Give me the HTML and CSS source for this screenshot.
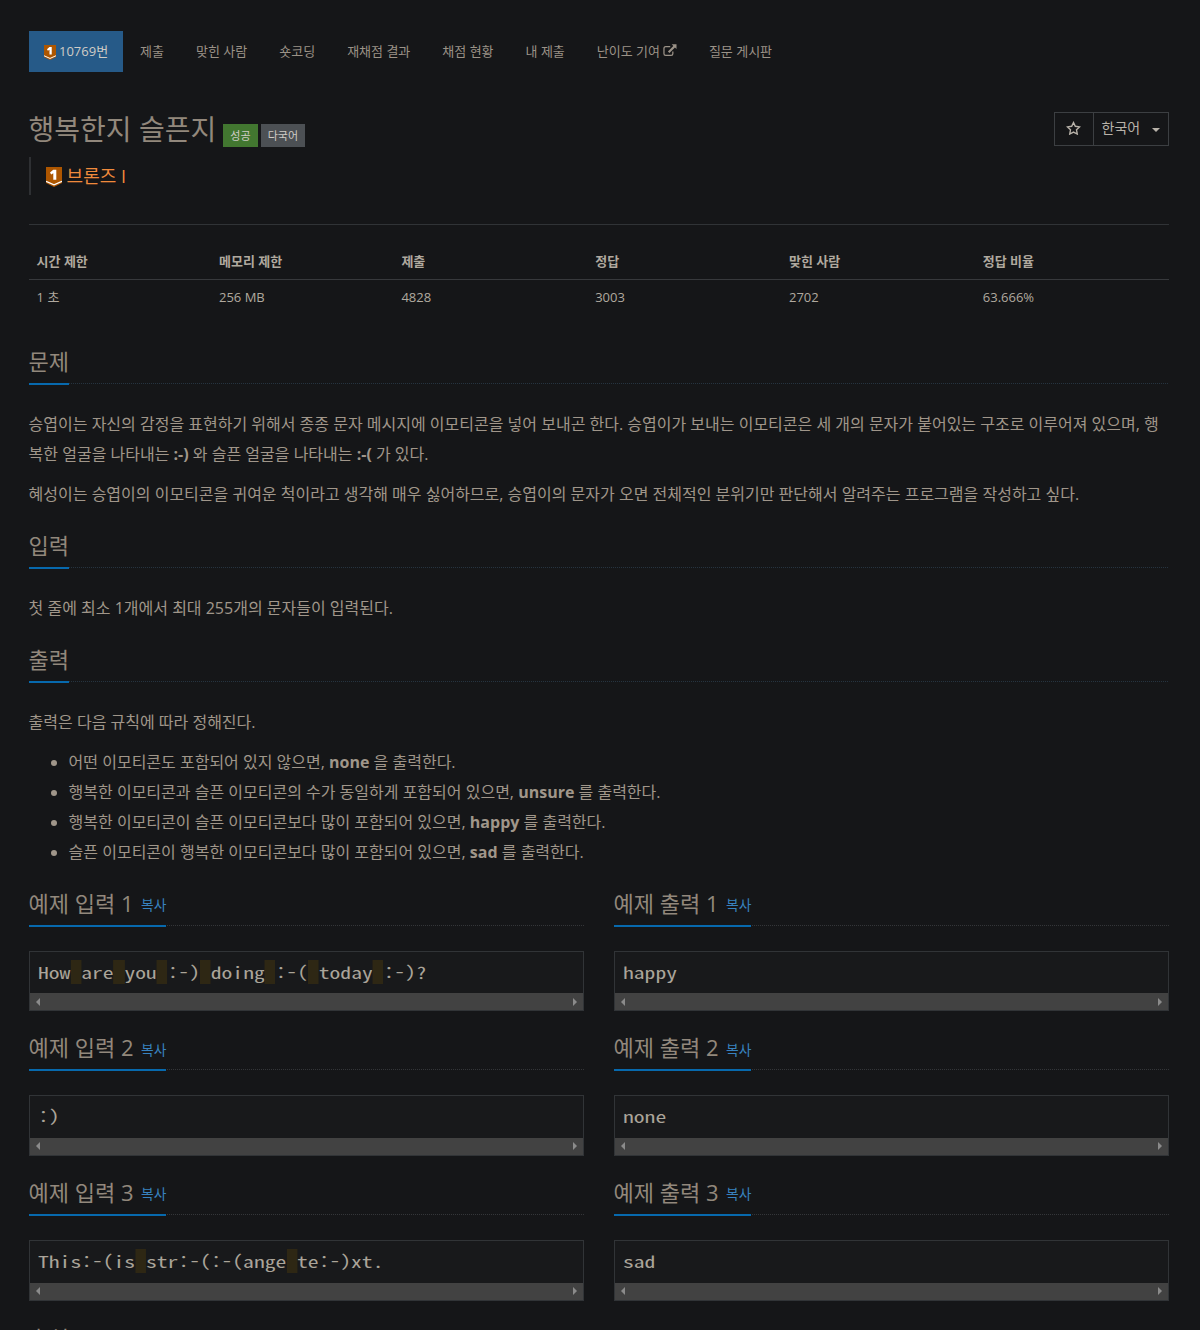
FILE: index.html
```html
<!DOCTYPE html>
<html lang="ko">
<head>
<meta charset="utf-8">
<title>10769번: 행복한지 슬픈지</title>
<link rel="stylesheet" href="styles.css">
</head>
<body>
<svg class="defs" width="0" height="0">
  <symbol id="tier" viewBox="0 0 16 20">
    <path fill="#ad5600" d="M0 0h16v16l-8 4-8-4z"/>
    <path fill="none" stroke="#fff" stroke-width="1.3" d="M0 14.3l8 3.6 8-3.6"/>
    <path fill="#fff" d="M7.3 2.8h3v10H7.300V6.300L5.200 7.500 4 5.600z"/>
  </symbol>
</svg>
<main class="container">
  <ul class="menu">
    <li class="active"><svg class="tier-sm"><use href="#tier"/></svg> 10769번</li>
    <li>제출</li>
    <li>맞힌 사람</li>
    <li>숏코딩</li>
    <li>재채점 결과</li>
    <li>채점 현황</li>
    <li>내 제출</li>
    <li>난이도 기여 <svg class="ext" viewBox="0 0 14 13"><path fill="none" stroke="currentColor" stroke-width="1.3" d="M7.5 2.6H2.8Q1 2.6 1 4.4v5.4q0 1.8 1.8 1.8h5.6q1.8 0 1.8-1.8V7.5"/><path fill="currentColor" d="M9 0h5v5l-1.6-1.6-5.7 5.7-1.6-1.6 5.6-5.7z"/></svg></li>
    <li>질문 게시판</li>
  </ul>

  <header class="title-row">
    <h1>행복한지 슬픈지</h1>
    <span class="label success">성공</span>
    <span class="label lang">다국어</span>
    <div class="buttons">
      <button class="star"><svg viewBox="0 0 14 13"><path fill="none" stroke="currentColor" stroke-width="1.3" stroke-linejoin="miter" d="M7 1.4l1.700 3.500 3.900.6-2.800 2.700.7 3.900L7 10.300 3.500 12.100l.7-3.900L1.400 5.500l3.900-.6z"/></svg></button>
      <button class="language">한국어<i class="caret"></i></button>
    </div>
  </header>
  <blockquote class="tier"><svg class="tier-lg"><use href="#tier"/></svg><span>브론즈 I</span></blockquote>
  <hr>

  <table class="info">
    <thead><tr><th class="w16">시간 제한</th><th class="w16">메모리 제한</th><th class="w17">제출</th><th class="w17">정답</th><th class="w17">맞힌 사람</th><th class="w17">정답 비율</th></tr></thead>
    <tbody><tr><td>1 초</td><td>256 MB</td><td>4828</td><td>3003</td><td>2702</td><td>63.666%</td></tr></tbody>
  </table>

  <section>
    <div class="headline"><h2>문제</h2></div>
    <p>승엽이는 자신의 감정을 표현하기 위해서 종종 문자 메시지에 이모티콘을 넣어 보내곤 한다. 승엽이가 보내는 이모티콘은 세 개의 문자가 붙어있는 구조로 이루어져 있으며, 행복한 얼굴을 나타내는 <b>:-)</b> 와 슬픈 얼굴을 나타내는 <b>:-(</b> 가 있다.</p>
    <p>혜성이는 승엽이의 이모티콘을 귀여운 척이라고 생각해 매우 싫어하므로, 승엽이의 문자가 오면 전체적인 분위기만 판단해서 알려주는 프로그램을 작성하고 싶다.</p>
  </section>
  <section>
    <div class="headline"><h2>입력</h2></div>
    <p>첫 줄에 최소 1개에서 최대 255개의 문자들이 입력된다.</p>
  </section>
  <section>
    <div class="headline"><h2>출력</h2></div>
    <p>출력은 다음 규칙에 따라 정해진다.</p>
    <ul class="rules">
      <li>어떤 이모티콘도 포함되어 있지 않으면, <b>none</b> 을 출력한다.</li>
      <li>행복한 이모티콘과 슬픈 이모티콘의 수가 동일하게 포함되어 있으면, <b>unsure</b> 를 출력한다.</li>
      <li>행복한 이모티콘이 슬픈 이모티콘보다 많이 포함되어 있으면, <b>happy</b> 를 출력한다.</li>
      <li>슬픈 이모티콘이 행복한 이모티콘보다 많이 포함되어 있으면, <b>sad</b> 를 출력한다.</li>
    </ul>
  </section>

  <div class="samples">
    <section>
      <div class="headline gray"><h2>예제 입력 1 <a>복사</a></h2></div>
      <div class="sample"><pre>How<mark> </mark>are<mark> </mark>you<mark> </mark>:-)<mark> </mark>doing<mark> </mark>:-(<mark> </mark>today<mark> </mark>:-)?</pre><div class="scrollbar"><i></i><i></i></div></div>
    </section>
    <section>
      <div class="headline gray"><h2>예제 출력 1 <a>복사</a></h2></div>
      <div class="sample"><pre>happy</pre><div class="scrollbar"><i></i><i></i></div></div>
    </section>
    <section>
      <div class="headline gray"><h2>예제 입력 2 <a>복사</a></h2></div>
      <div class="sample"><pre>:)</pre><div class="scrollbar"><i></i><i></i></div></div>
    </section>
    <section>
      <div class="headline gray"><h2>예제 출력 2 <a>복사</a></h2></div>
      <div class="sample"><pre>none</pre><div class="scrollbar"><i></i><i></i></div></div>
    </section>
    <section>
      <div class="headline gray"><h2>예제 입력 3 <a>복사</a></h2></div>
      <div class="sample"><pre>This:-(is<mark> </mark>str:-(:-(ange<mark> </mark>te:-)xt.</pre><div class="scrollbar"><i></i><i></i></div></div>
    </section>
    <section>
      <div class="headline gray"><h2>예제 출력 3 <a>복사</a></h2></div>
      <div class="sample"><pre>sad</pre><div class="scrollbar"><i></i><i></i></div></div>
    </section>
  </div>
  <section class="source">
    <div class="headline"><h2>출처</h2></div>
  </section>
</main>
</body>
</html>
```
FILE: styles.css
```css
* { box-sizing: border-box; }
html { background: #151618; }
body {
  margin: 0;
  height: 1330px;
  overflow: hidden;
  background: #151618;
  color: #a8a095;
  font: 13px/20.8px "Open Sans", "Noto Sans CJK KR", sans-serif;
}
.defs { display: block; }
.container { width: 1140px; margin-left: 28.6px; padding-top: 31px; }
ul, h1, h2, p, pre, blockquote { margin: 0; padding: 0; font-weight: 400; }

.menu { display: flex; gap: 2px; list-style: none; height: 41px; color: #9b9287; }
.menu li { padding: 10px 15px; white-space: nowrap; }
.menu .active { background: #265a88; color: #d0ccc6; }
.tier-sm { width: 12px; height: 15px; vertical-align: -3.5px; }
.ext { width: 13.5px; height: 13px; vertical-align: -1px; }

.title-row { display: flex; align-items: flex-start; margin-top: 40px; height: 45px; }
h1 { font-size: 28px; line-height: 34px; color: #92887c; margin-right: 7px; }
.label { margin: 12px 3px 0 0; padding: 0 7.1px; font-size: 11px; line-height: 23px; color: #d0ccc6; }
.success { background: #427730; }
.lang { background: #4c5054; }
.buttons { display: flex; margin-left: auto; }
button {
  height: 34px;
  padding: 0;
  border: 1px solid #3c3f42;
  background: #151618;
  color: #b8b2a9;
  font: 14px/20px "Open Sans", "Noto Sans CJK KR", sans-serif;
}
.star { width: 40px; }
.star svg { width: 15px; height: 14px; vertical-align: -1px; }
.language { display: flex; align-items: center; justify-content: space-between; width: 76px; margin-left: -1px; padding: 0 8px 2px 8px; }
.caret { border: 4px solid transparent; border-top-color: currentColor; border-bottom: 0; margin-top: 3px; }

.tier { display: flex; align-items: center; gap: 5px; height: 38px; padding-left: 15px; border-left: 2px solid #2e3033; color: #f08a3c; font-size: 18px; }
.tier-lg { width: 16px; height: 20px; margin-top: 2px; }
hr { margin: 29px 0 19px; border: 0; border-top: 1px solid #303336; }

.info { width: 100%; table-layout: fixed; border-collapse: collapse; color: #b0a99f; }
.info th, .info td { padding: 7px 8px; text-align: left; }
.info th { border-bottom: 1px solid #37393c; }
.w16 { width: 16%; }
.w17 { width: 17%; }
.info { margin-bottom: 20px; }

.headline { display: flex; height: 50px; align-items: flex-end; margin-bottom: 24px; background: repeating-linear-gradient(90deg, #263440 0 1px, transparent 1px 2px) 0 48px / 100% 1px no-repeat; }
.gray { background-image: repeating-linear-gradient(90deg, #343639 0 1px, transparent 1px 2px); }
h2 { font-size: 22px; line-height: 30px; padding-bottom: 7px; border-bottom: 2px solid #0769ad; color: #92887c; }
h2 a { margin-left: 1.7px; font-size: 13.8px; line-height: 18px; vertical-align: 1.5px; color: #3882bf; }
p, .rules { margin-bottom: 10px; font-size: 16px; line-height: 30px; color: #a0968a; word-break: break-all; }
.rules { padding-left: 40px; }

.samples { display: grid; grid-template-columns: 1fr 1fr; column-gap: 30px; }
.sample { height: 60.7px; margin-bottom: 10px; border: 1px solid #313437; background: #18191b; display: flex; flex-direction: column; justify-content: space-between; }
pre { width: 400px; margin-left: 8px; padding: 8px 0; height: 41.5px; font: 16.4px/25.5px "Noto Sans Mono CJK KR", "Liberation Mono", monospace; color: #aaa499; transform: scaleX(1.317); transform-origin: 0 0; }
mark { background: #2e2714; }
.scrollbar { display: flex; justify-content: space-between; align-items: center; height: 17px; padding: 0 6px; background: #424242; }
.scrollbar i { border: 4px solid transparent; border-left: 0; border-right-color: #8b8b8b; }
.scrollbar i + i { border-left: 4px solid #8b8b8b; border-right: 0; }
.source { padding-top: 1px; }
```
